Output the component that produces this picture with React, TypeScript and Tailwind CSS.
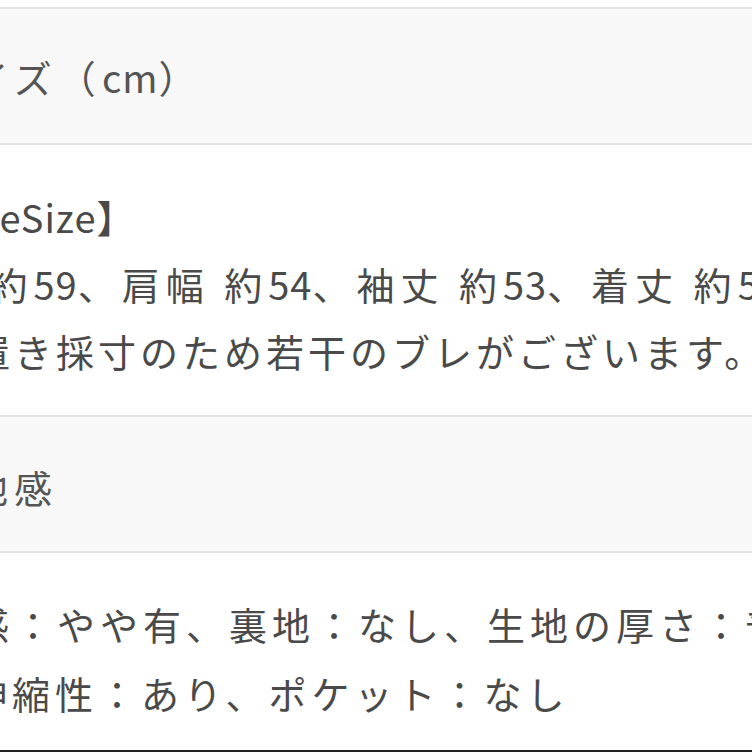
const num = 'tracking-[1px]'

function N({ children }: { children: React.ReactNode }) {
  return <span className={num}>{children}</span>
}

export default function App() {
  return (
    <div className="h-[752px] w-[752px] overflow-hidden whitespace-nowrap bg-white font-['Noto_Sans_CJK_JP','Noto_Sans',sans-serif] text-[38px] tracking-[6px] text-[#4a4a4a]">
      <div className="h-[7px] bg-[#fdfdfd]" />

      <div className="flex h-[138px] items-center border-y-2 border-[#e4e4e4] bg-[#f8f8f8] text-[#555]">
        <p className="-ml-[73px]">
          サイズ（<N>cm</N>）
        </p>
      </div>

      <div className="h-[270px] pt-[38px] leading-[67px]">
        <p className="-ml-[103px]">
          【<N>FreeSize</N>】
        </p>
        <p className="-ml-[113px]">
          身幅 約<N>59</N>、肩幅 約<N>54</N>、袖丈 約<N>53</N>、着丈 約<N>58</N>
        </p>
        <p className="-ml-[70px] tracking-[4px]">平置き採寸のため若干のブレがございます。</p>
      </div>

      <div className="flex h-[138px] items-center border-y-2 border-[#e4e4e4] bg-[#f8f8f8] pt-1 text-[#555]">
        <p className="-ml-[74px]">生地感</p>
      </div>

      <div className="h-[197px] pt-[36px] leading-[69px] tracking-[5px]">
        <p className="-ml-[72px]">質感：やや有、裏地：なし、生地の厚さ：普通</p>
        <p className="-ml-[74px]">・伸縮性：あり、ポケット：なし</p>
      </div>

      <div className="h-[2px] bg-[#222]" />
    </div>
  )
}
